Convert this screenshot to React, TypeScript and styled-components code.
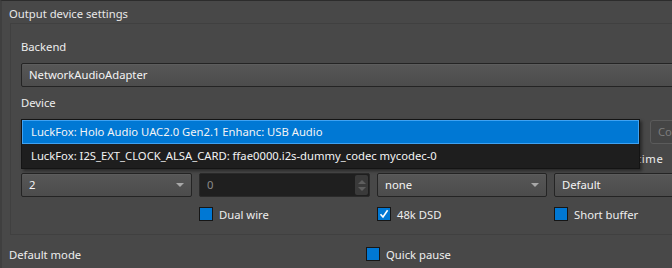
import React from 'react';
import styled, { createGlobalStyle } from 'styled-components';

const GlobalStyle = createGlobalStyle`
  html, body {
    margin: 0;
    padding: 0;
    background: #474747;
    overflow: hidden;
  }
  body {
    font-family: "Noto Sans", "Open Sans", sans-serif;
    font-size: 11.25px;
    color: #eeeeee;
  }
`;

const Window = styled.div`
  width: 668px;
  height: 267px;
  overflow: hidden;
  background: #484848;
  border-top: 1px solid #2c2c2c;
  border-left: 2px solid #3f3f3f;
  border-right: 2px solid #2a2a2a;
  padding-left: 7px;
  box-sizing: content-box;
`;

const GroupTitle = styled.div`
  height: 22px;
  line-height: 25px;
  color: #e8e8e8;
`;

const Frame = styled.div`
  margin-left: 1px;
  width: 720px;
  border: 1px solid #404040;
  border-right: none;
  padding: 15px 0 3px 10px;
`;

const FieldLabel = styled.div`
  height: 16px;
  line-height: 16px;
  margin-bottom: 8px;
`;

const Combo = styled.div<{ $width?: number }>`
  position: relative;
  flex-shrink: 0;
  box-sizing: border-box;
  width: ${p => (p.$width ? `${p.$width}px` : '100%')};
  height: 24px;
  line-height: 22px;
  padding-left: 7px;
  border: 1px solid #242424;
  border-radius: 2px;
  background: linear-gradient(#575757, #4c4c4c);
  box-shadow: inset 0 1px 0 #5d5d5d;
  color: #f4f4f4;
  white-space: nowrap;
`;

const Arrow = styled.span`
  position: absolute;
  right: 7px;
  top: 9px;
  width: 0;
  height: 0;
  border-left: 4px solid transparent;
  border-right: 4px solid transparent;
  border-top: 4px solid #a8a8a8;
`;

const Stack = styled.div`
  display: flex;
  flex-direction: column;
`;

const DeviceRow = styled.div`
  position: relative;
  display: flex;
  gap: 10px;
  margin-top: 1px;
  margin-bottom: 6px;
`;

const Button = styled.div`
  flex-shrink: 0;
  box-sizing: border-box;
  height: 24px;
  width: 80px;
  line-height: 22px;
  padding-left: 7px;
  border: 1px solid #5b5b5b;
  border-radius: 3px;
  background: #454545;
  color: #7c7c7c;
`;

const Popup = styled.div`
  position: absolute;
  left: 0;
  top: -1px;
  width: 619px;
  box-sizing: border-box;
  border: 1px solid #141414;
  background: #1e1e1e;
  box-shadow: 2px 2px 3px rgba(0, 0, 0, 0.45);
  z-index: 2;
`;

const PopupItem = styled.div<{ $selected?: boolean }>`
  box-sizing: border-box;
  height: 24px;
  line-height: 22px;
  padding-left: 8px;
  white-space: nowrap;
  color: #f4f4f4;
  background: ${p => (p.$selected ? '#0078d4' : 'transparent')};
  border: 1px solid ${p => (p.$selected ? '#3fa2f2' : 'transparent')};
`;

const Grid = styled.div<{ $height: number }>`
  display: grid;
  grid-template-columns: 171px 171px 170px 171px;
  column-gap: 7px;
  height: ${p => p.$height}px;
  align-items: center;
`;

const GridLabel = styled.div`
  white-space: nowrap;
  letter-spacing: 0.6px;
`;

const SpinBox = styled.div`
  position: relative;
  box-sizing: border-box;
  height: 24px;
  line-height: 22px;
  padding-left: 7px;
  border: 1px solid #2a2a2a;
  border-radius: 2px;
  background: #1f1f1f;
  color: #8a8a8a;
`;

const SpinButtons = styled.div`
  position: absolute;
  right: 1px;
  top: 1px;
  bottom: 1px;
  width: 13px;
  border-radius: 2px;
  background: #3a3a3a;
  display: flex;
  flex-direction: column;
  align-items: center;
  justify-content: center;
  gap: 3px;
`;

const SpinArrow = styled.span<{ $up?: boolean }>`
  width: 0;
  height: 0;
  border-left: 4px solid transparent;
  border-right: 4px solid transparent;
  ${p => (p.$up ? 'border-bottom: 4px solid #5e5e5e;' : 'border-top: 4px solid #5e5e5e;')}
`;

const Check = styled.label`
  display: flex;
  align-items: center;
  gap: 6px;
  white-space: nowrap;
`;

const Box = styled.span`
  box-sizing: border-box;
  width: 14px;
  height: 14px;
  border: 1px solid #161616;
  background: #0078d4;
  display: flex;
  align-items: center;
  justify-content: center;
`;

const BottomRow = styled.div`
  display: grid;
  grid-template-columns: 357px auto;
  align-items: center;
  height: 38px;
`;

const CheckBox = ({ label, checked }: { label: string; checked?: boolean }) => (
  <Check>
    <Box>
      {checked && (
        <svg width="10" height="10" viewBox="0 0 10 10">
          <path d="M1.5 5.2 L4 8 L8.6 1.2" fill="none" stroke="#ffffff" strokeWidth="1.6" />
        </svg>
      )}
    </Box>
    {label}
  </Check>
);

export default function App() {
  return (
    <Window>
      <GlobalStyle />
      <GroupTitle>Output device settings</GroupTitle>
      <Frame>
        <Stack>
          <FieldLabel>Backend</FieldLabel>
          <Combo>NetworkAudioAdapter</Combo>
          <FieldLabel style={{ marginTop: 8 }}>Device</FieldLabel>
          <DeviceRow>
            <Combo $width={619}>
              LuckFox: Holo Audio UAC2.0 Gen2.1 Enhanc: USB Audio
              <Arrow />
            </Combo>
            <Button>Configure</Button>
            <Popup>
              <PopupItem $selected>LuckFox: Holo Audio UAC2.0 Gen2.1 Enhanc: USB Audio</PopupItem>
              <PopupItem>LuckFox: I2S_EXT_CLOCK_ALSA_CARD: ffae0000.i2s-dummy_codec mycodec-0</PopupItem>
            </Popup>
          </DeviceRow>
          <Grid $height={16}>
            <GridLabel>Channels</GridLabel>
            <GridLabel>Offset</GridLabel>
            <GridLabel>DSD mode</GridLabel>
            <GridLabel>Buffers fill up time</GridLabel>
          </Grid>
        </Stack>
        <Grid $height={24} style={{ marginTop: 7 }}>
          <Combo>
            2<Arrow />
          </Combo>
          <SpinBox>
            0
            <SpinButtons>
              <SpinArrow $up />
              <SpinArrow />
            </SpinButtons>
          </SpinBox>
          <Combo>
            none<Arrow />
          </Combo>
          <Combo>Default</Combo>
        </Grid>
        <Grid $height={34}>
          <div />
          <CheckBox label="Dual wire" />
          <CheckBox label="48k DSD" checked />
          <CheckBox label="Short buffer" />
        </Grid>
      </Frame>
      <BottomRow>
        <span>Default mode</span>
        <CheckBox label="Quick pause" />
      </BottomRow>
    </Window>
  );
}
